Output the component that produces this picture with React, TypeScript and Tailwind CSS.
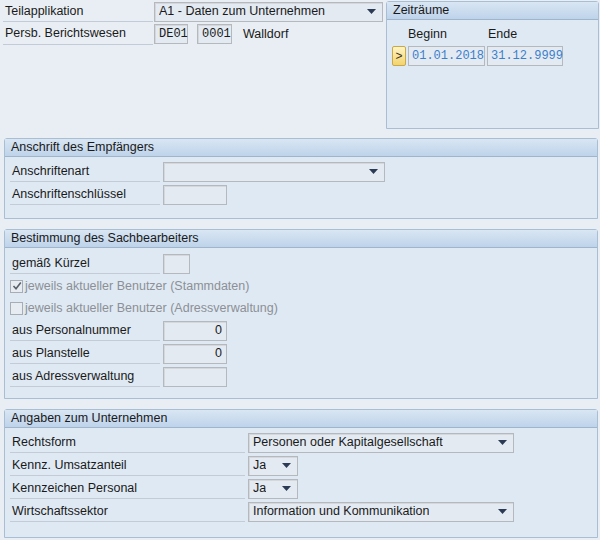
import React from 'react'

const font = { fontFamily: '"Liberation Sans", Arial, sans-serif' }

function Caret() {
    return (
        <svg width="9" height="5" viewBox="0 0 9 5" className="flex-shrink-0">
            <path d="M0 0 H9 L4.5 5 Z" fill="#2b3a55" />
        </svg>
    )
}

function Label({ text, w = 'w-[150px]' }: { text: string; w?: string }) {
    return (
        <div className={`${w} h-[21px] flex items-center border-b border-[#c3ccd6] text-[12.5px] text-[#1a1a1a] pl-[2px]`}>
            {text}
        </div>
    )
}

function Field({ w, value = '', align = 'left', mono = false }: { w: string; value?: string; align?: 'left' | 'right'; mono?: boolean }) {
    return (
        <div
            className={`${w} h-[20px] border border-[#b5b9be] shadow-[inset_1px_1px_0_#d4d7db] bg-[#e3eaf2] flex items-center px-[4px] text-[12.5px] text-[#1a1a1a] ${
                align === 'right' ? 'justify-end' : ''
            }`}
            style={mono ? { fontFamily: '"Liberation Mono", monospace', fontSize: 12 } : undefined}
        >
            {value}
        </div>
    )
}

function Select({ w, value = '' }: { w: string; value?: string }) {
    return (
        <div className={`${w} h-[20px] border border-[#b5b9be] shadow-[inset_1px_1px_0_#d4d7db] bg-[#e3eaf2] flex items-center justify-between pl-[4px] pr-[6px] text-[12.5px] text-[#1a1a1a]`}>
            <span className="truncate">{value}</span>
            <Caret />
        </div>
    )
}

function Group({ title, children, className = '' }: { title: string; children: React.ReactNode; className?: string }) {
    return (
        <div className={`border border-[#a9bdd3] rounded-t-[3px] bg-[#dfe9f3] ${className}`}>
            <div className="h-[18px] flex items-center px-[6px] text-[12.5px] text-[#1a1a1a] bg-gradient-to-b from-[#d9e6f3] to-[#bed3ea] border-b border-[#9fb5cc]">
                {title}
            </div>
            {children}
        </div>
    )
}

function Row({ label, children }: { label: string; children?: React.ReactNode }) {
    return (
        <div className="flex items-center gap-[3px] h-[23px]">
            <Label text={label} />
            {children}
        </div>
    )
}

function Check({ checked, text }: { checked: boolean; text: string }) {
    return (
        <div className="flex items-center h-[22px] gap-[2px] text-[12.5px] text-[#8c9096]">
            <div className="w-[13px] h-[13px] border border-[#a8adb3] bg-[#e6ecf2] flex items-center justify-center">
                {checked && (
                    <svg width="10" height="10" viewBox="0 0 10 10">
                        <path d="M1.5 5 L4 7.8 L8.8 1.5" stroke="#5b6068" strokeWidth="1.6" fill="none" />
                    </svg>
                )}
            </div>
            <span>{text}</span>
        </div>
    )
}

export default function App() {
    return (
        <div style={font} className="w-[600px] h-[540px] bg-[#e9eef4] overflow-hidden">
            <div className="flex h-[130px]">
                <div className="w-[386px] pt-[1px] pl-[3px]">
                    <div className="flex items-center gap-[1px] h-[21px]">
                        <Label text="Teilapplikation" />
                        <Select w="w-[229px]" value="A1 - Daten zum Unternehmen" />
                    </div>
                    <div className="flex items-center h-[24px]">
                        <Label text="Persb. Berichtswesen" />
                        <div className="ml-[1px]">
                            <Field w="w-[34px]" value="DE01" mono />
                        </div>
                        <div className="ml-[9px]">
                            <Field w="w-[35px]" value="0001" mono />
                        </div>
                        <span className="ml-[11px] text-[12.5px] text-[#1a1a1a]">Walldorf</span>
                    </div>
                </div>
                <Group title="Zeiträume" className="w-[213px] h-[128px] mt-[1px]">
                    <div className="flex pl-[21px] pt-[6px] text-[12.5px] text-[#1a1a1a] h-[23px] items-center">
                        <span className="w-[80px]">Beginn</span>
                        <span>Ende</span>
                    </div>
                    <div className="flex items-center pl-[5px] pt-[3px] gap-[2px]">
                        <div className="w-[14px] h-[20px] rounded-[2px] border border-[#c9a84a] bg-gradient-to-b from-[#fff4c4] to-[#f3d36b] flex items-center justify-center text-[12px] text-[#3a3320]">
                            &gt;
                        </div>
                        <div className="w-[77px] h-[20px] border border-[#b5b9be] bg-[#e3eaf2] flex items-center px-[3px] text-[#3b7fcc]" style={{ fontFamily: '"Liberation Mono", monospace', fontSize: 12 }}>
                            01.01.2018
                        </div>
                        <div className="w-[76px] h-[20px] border border-[#b5b9be] bg-[#e3eaf2] flex items-center px-[3px] text-[#3b7fcc]" style={{ fontFamily: '"Liberation Mono", monospace', fontSize: 12 }}>
                            31.12.9999
                        </div>
                    </div>
                </Group>
            </div>

            <div className="pl-[4px] pr-[2px] pt-[8px] flex flex-col gap-[10px]">
                <Group title="Anschrift des Empfängers" className="h-[81px]">
                    <div className="pl-[5px] pt-[3px]">
                        <Row label="Anschriftenart">
                            <Select w="w-[222px]" />
                        </Row>
                        <Row label="Anschriftenschlüssel">
                            <Field w="w-[64px]" />
                        </Row>
                    </div>
                </Group>

                <Group title="Bestimmung des Sachbearbeiters" className="h-[170px]">
                    <div className="pl-[5px] pt-[4px]">
                        <Row label="gemäß Kürzel">
                            <Field w="w-[27px]" />
                        </Row>
                        <Check checked text="jeweils aktueller Benutzer (Stammdaten)" />
                        <Check checked={false} text="jeweils aktueller Benutzer (Adressverwaltung)" />
                        <Row label="aus Personalnummer">
                            <Field w="w-[64px]" value="0" align="right" />
                        </Row>
                        <Row label="aus Planstelle">
                            <Field w="w-[64px]" value="0" align="right" />
                        </Row>
                        <Row label="aus Adressverwaltung">
                            <Field w="w-[64px]" />
                        </Row>
                    </div>
                </Group>

                <Group title="Angaben zum Unternehmen" className="h-[129px]">
                    <div className="pl-[5px] pt-[3px]">
                        <div className="flex items-center gap-[3px] h-[23px]">
                            <Label text="Rechtsform" w="w-[235px]" />
                            <Select w="w-[266px]" value="Personen oder Kapitalgesellschaft" />
                        </div>
                        <div className="flex items-center gap-[3px] h-[23px]">
                            <Label text="Kennz. Umsatzanteil" w="w-[235px]" />
                            <Select w="w-[50px]" value="Ja" />
                        </div>
                        <div className="flex items-center gap-[3px] h-[23px]">
                            <Label text="Kennzeichen Personal" w="w-[235px]" />
                            <Select w="w-[50px]" value="Ja" />
                        </div>
                        <div className="flex items-center gap-[3px] h-[23px]">
                            <Label text="Wirtschaftssektor" w="w-[235px]" />
                            <Select w="w-[266px]" value="Information und Kommunikation" />
                        </div>
                    </div>
                </Group>
            </div>
        </div>
    )
}
